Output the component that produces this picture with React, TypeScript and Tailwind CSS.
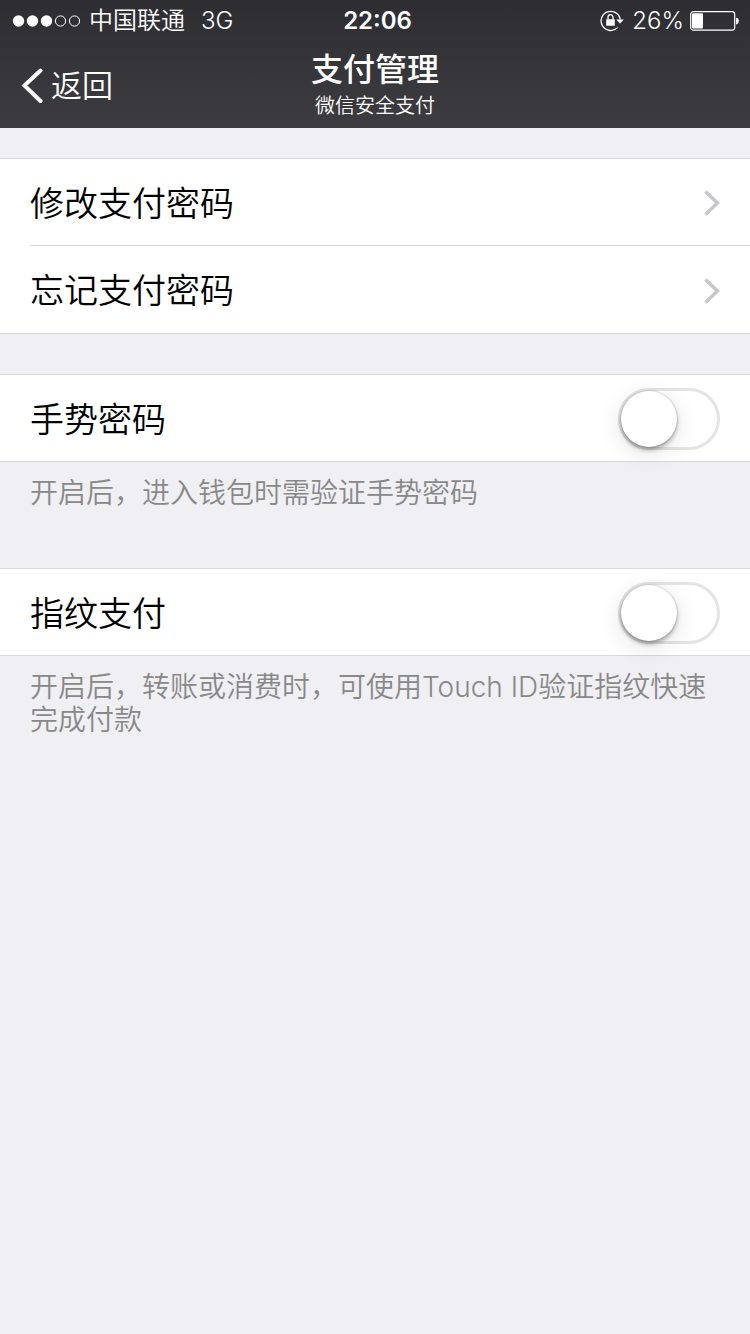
import { useId, useState, type ReactNode } from "react";

const links = ["修改支付密码", "忘记支付密码"];

export default function App() {
  return (
    <div className="min-h-screen bg-[#efeff4] font-['Inter','Noto_Sans_CJK_SC',sans-serif] font-[350] text-black">
      <header className="bg-linear-to-b from-[#2e2d32] to-[#3d3c41] text-white">
        <StatusBar />
        <NavBar />
      </header>

      <main className="pt-[30px]">
        <Group>
          {links.map((label) => (
            <LinkRow key={label} label={label} />
          ))}
        </Group>

        <div className="pt-10">
          <Group>
            <SwitchRow label="手势密码" />
          </Group>
          <Note>开启后，进入钱包时需验证手势密码</Note>
        </div>

        <div className="pt-[58px]">
          <Group>
            <SwitchRow label="指纹支付" />
          </Group>
          <Note>开启后，转账或消费时，可使用Touch ID验证指纹快速完成付款</Note>
        </div>
      </main>
    </div>
  );
}

function StatusBar() {
  return (
    <div className="grid h-10 grid-cols-[1fr_auto_1fr] items-center pt-px pr-[11px] pl-3 text-2xl">
      <div className="flex items-center">
        <svg className="mr-2 h-3 w-[69px]" viewBox="0 0 69 12" aria-hidden="true">
          <circle cx="6.5" cy="6" r="5.7" fill="#fff" />
          <circle cx="20.5" cy="6" r="5.7" fill="#fff" />
          <circle cx="34.5" cy="6" r="5.7" fill="#fff" />
          <circle cx="48.5" cy="6" r="5.1" fill="none" stroke="#fff" />
          <circle cx="62.5" cy="6" r="5.1" fill="none" stroke="#fff" />
        </svg>
        <span>中国联通</span>
        <span className="ml-4">3G</span>
      </div>
      <span className="pl-1 font-semibold">22:06</span>
      <div className="flex items-center justify-end">
        <LockIcon />
        <span className="ml-2">26%</span>
        <BatteryIcon />
      </div>
    </div>
  );
}

function LockIcon() {
  return (
    <svg className="h-[22px] w-6" viewBox="0 0 24 22" fill="none" aria-hidden="true">
      <path d="M17.6 17.6A9.6 9.6 0 1 1 20.2 9.6" stroke="#fff" strokeWidth="1.3" />
      <path d="M16.2 9.4h7.6L20 13.4z" fill="#fff" />
      <rect x="6.2" y="9.2" width="8.6" height="6.6" rx="0.6" fill="#fff" />
      <path d="M8 9.6V7.2a2.5 2.5 0 0 1 5 0v2.4" stroke="#fff" strokeWidth="1.3" />
    </svg>
  );
}

function BatteryIcon() {
  return (
    <svg className="ml-[6px] h-5 w-[49px]" viewBox="0 0 49 20" fill="none" aria-hidden="true">
      <rect x="0.7" y="0.7" width="44" height="18.4" rx="2.6" stroke="#fff" strokeWidth="1.2" />
      <rect x="2" y="2.2" width="11" height="15.4" rx="1" fill="#fff" />
      <path d="M46 6.4c1.8.3 2.8 1.5 2.8 3.5s-1 3.2-2.8 3.5z" fill="#fff" />
    </svg>
  );
}

function NavBar() {
  return (
    <div className="grid h-22 grid-cols-[1fr_auto_1fr] items-center px-5 pt-1">
      <button type="button" className="flex items-center gap-2 justify-self-start text-[31px]">
        <svg className="h-9 w-[23px]" viewBox="0 0 23 36" fill="none" aria-hidden="true">
          <path d="M20.5 2.5L4.4 17.5l16.1 15.5" stroke="#fff" strokeWidth="4" strokeLinecap="round" />
        </svg>
        返回
      </button>
      <div className="text-center">
        <h1 className="text-[32px] leading-10 font-medium">支付管理</h1>
        <p className="text-xl leading-8">微信安全支付</p>
      </div>
    </div>
  );
}

function Group({ children }: { children: ReactNode }) {
  return <div className="divide-y divide-[#d9d9dc] border-y border-[#d9d9dc] bg-white pl-[30px]">{children}</div>;
}

function LinkRow({ label }: { label: string }) {
  return (
    <a href="#" className="flex h-[87px] items-center justify-between pt-0.5 pr-[30px] text-[34px]">
      {label}
      <svg className="h-[26px] w-4" viewBox="0 0 16 26" fill="none" aria-hidden="true">
        <path d="M1.5 1.5L13.5 13l-12 11.5" stroke="#c7c7cc" strokeWidth="3.6" />
      </svg>
    </a>
  );
}

function SwitchRow({ label }: { label: string }) {
  const id = useId();
  const [on, setOn] = useState(false);

  return (
    <div className="flex h-[86px] items-center justify-between pt-0.5 pr-[30px] text-[34px]">
      <label htmlFor={id}>{label}</label>
      <input
        id={id}
        type="checkbox"
        role="switch"
        checked={on}
        onChange={(e) => setOn(e.target.checked)}
        className="h-[62px] w-[102px] appearance-none rounded-full border-3 border-[#e4e4e4] bg-white before:block before:size-14 before:rounded-full before:bg-white before:shadow-[0_3px_4px_rgba(0,0,0,0.3),0_0_2px_rgba(0,0,0,0.25),0_6px_24px_rgba(0,0,0,0.12)] before:content-[''] checked:border-[#4cd964] checked:bg-[#4cd964] checked:before:ml-10"
      />
    </div>
  );
}

function Note({ children }: { children: ReactNode }) {
  return <p className="px-[30px] pt-[15px] text-[28px] leading-[33px] text-[#888]">{children}</p>;
}
